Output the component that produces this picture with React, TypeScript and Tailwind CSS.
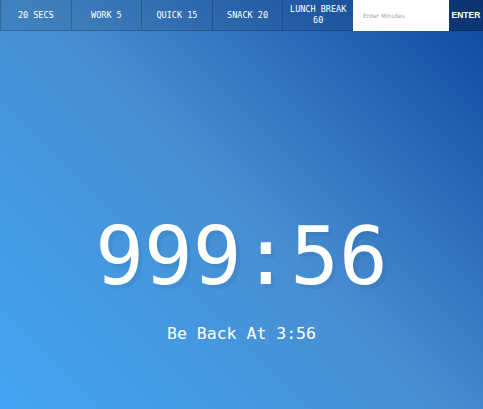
import React from "react";

const mono = "font-['DejaVu_Sans_Mono',monospace]";

export default function App() {
  const buttons = ["20 Secs", "Work 5", "Quick 15", "Snack 20", "Lunch Break 60"];
  return (
    <div
      className={`flex h-screen flex-col text-center ${mono} bg-[linear-gradient(45deg,#42a5f5_0%,#478ed1_50%,#0d47a1_100%)]`}
    >
      <div className="flex h-[31px]">
        {buttons.map((b) => (
          <button
            key={b}
            className="flex-1 border-l border-b border-[rgba(0,0,0,0.2)] bg-[rgba(0,0,0,0.1)] px-1 text-[8.5px] leading-[11px] font-normal uppercase text-white"
          >
            {b}
          </button>
        ))}
        <form className="flex w-[130px]" onSubmit={(e) => e.preventDefault()}>
          <input
            type="text"
            placeholder="Enter Minutes"
            className="w-[96px] border-0 bg-white px-[10px] text-[6px] font-['DejaVu_Sans',sans-serif] text-gray-700 placeholder:text-gray-400 outline-none"
          />
          <button
            type="submit"
            className="flex-1 border-b border-[rgba(0,0,0,0.2)] bg-[rgba(0,0,0,0.3)] text-[8.5px] font-bold uppercase text-white font-['Liberation_Sans',sans-serif]"
          >
            Enter
          </button>
        </form>
      </div>
      <div className="flex flex-1 flex-col items-center justify-center">
        <h1 className="mt-[118px] text-[81px] leading-none font-thin text-white [text-shadow:4px_4px_0_rgba(0,0,0,0.05)]">
          999:56
        </h1>
        <p className="mt-[29px] text-[16.5px] leading-none text-white">Be Back At 3:56</p>
      </div>
    </div>
  );
}
